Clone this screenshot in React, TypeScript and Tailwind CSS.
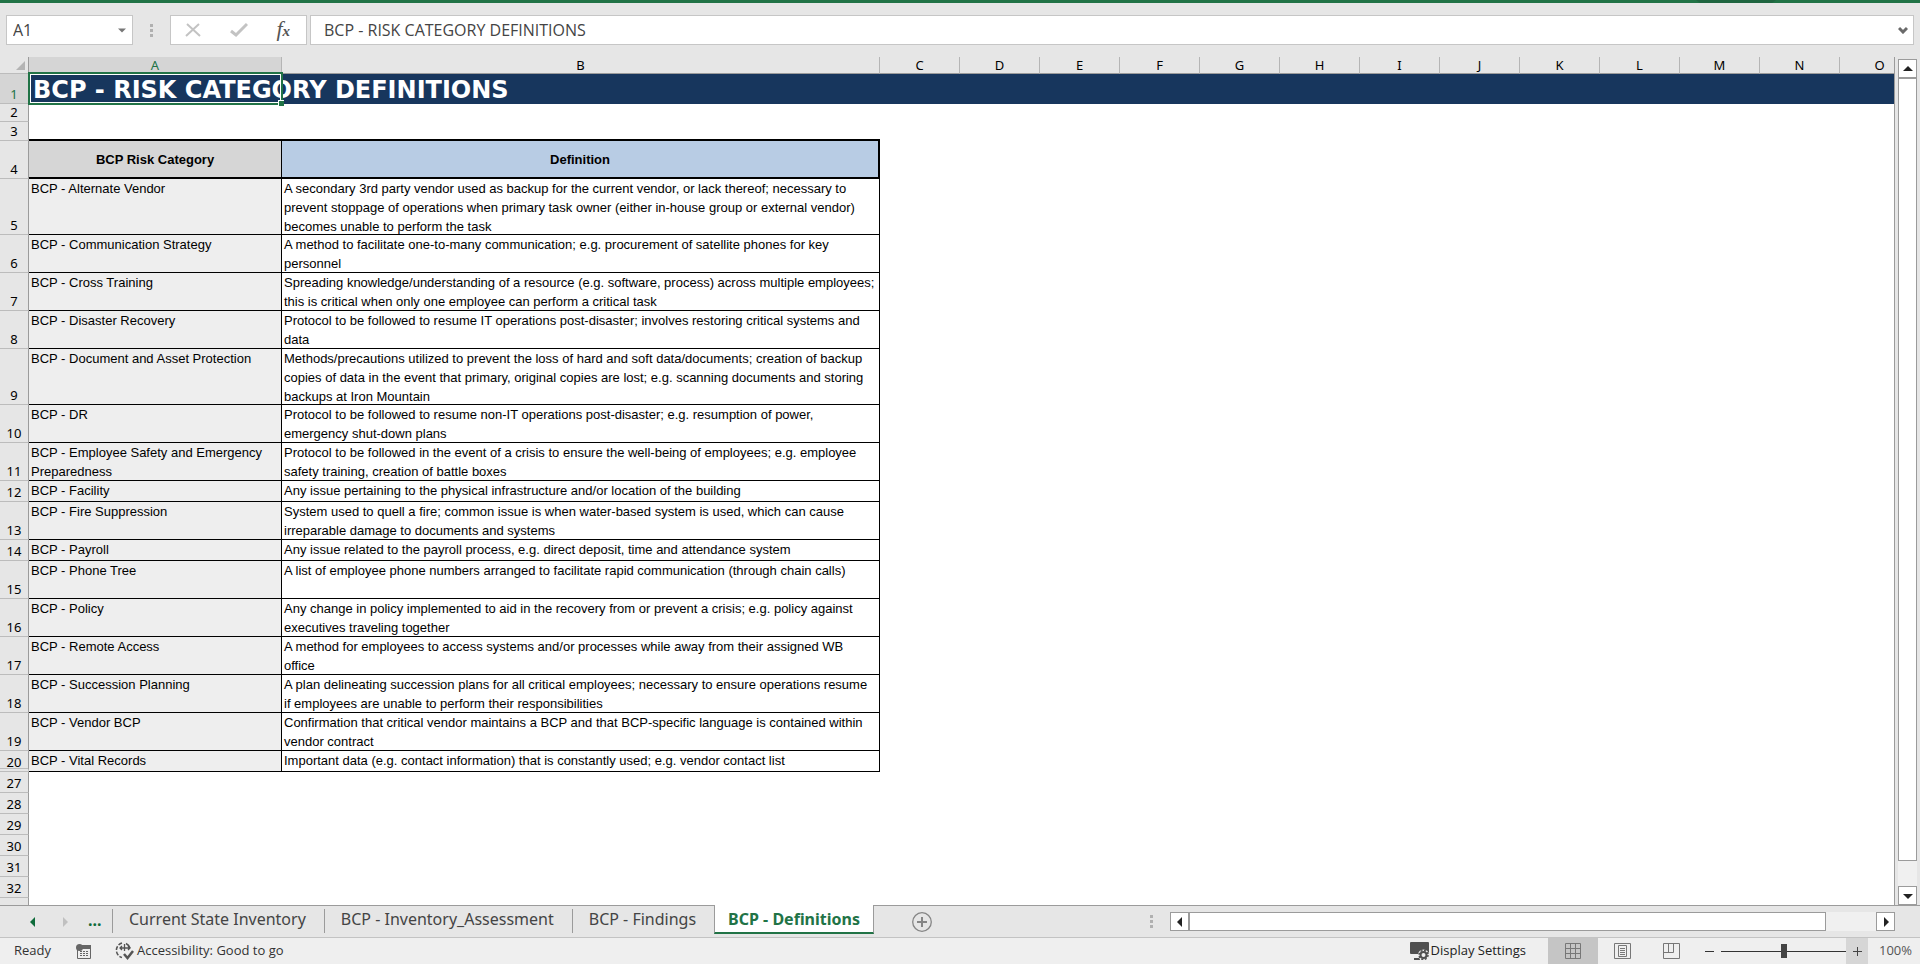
import clsx from "clsx";

type Entry = {
  row: number;
  height: string;
  category: string;
  definition: string[];
};

const entries: Entry[] = [
  {
    row: 5,
    height: "h-14",
    category: "BCP - Alternate Vendor",
    definition: [
      "A secondary 3rd party vendor used as backup for the current vendor, or lack thereof; necessary to",
      "prevent stoppage of operations when primary task owner (either in-house group or external vendor)",
      "becomes unable to perform the task",
    ],
  },
  {
    row: 6,
    height: "h-[38px]",
    category: "BCP - Communication Strategy",
    definition: [
      "A method to facilitate one-to-many communication; e.g. procurement of satellite phones for key",
      "personnel",
    ],
  },
  {
    row: 7,
    height: "h-[38px]",
    category: "BCP - Cross Training",
    definition: [
      "Spreading knowledge/understanding of a resource (e.g. software, process) across multiple employees;",
      "this is critical when only one employee can perform a critical task",
    ],
  },
  {
    row: 8,
    height: "h-[38px]",
    category: "BCP - Disaster Recovery",
    definition: [
      "Protocol to be followed to resume IT operations post-disaster; involves restoring critical systems and",
      "data",
    ],
  },
  {
    row: 9,
    height: "h-14",
    category: "BCP - Document and Asset Protection",
    definition: [
      "Methods/precautions utilized to prevent the loss of hard and soft data/documents; creation of backup",
      "copies of data in the event that primary, original copies are lost; e.g. scanning documents and storing",
      "backups at Iron Mountain",
    ],
  },
  {
    row: 10,
    height: "h-[38px]",
    category: "BCP - DR",
    definition: [
      "Protocol to be followed to resume non-IT operations post-disaster; e.g. resumption of power,",
      "emergency shut-down plans",
    ],
  },
  {
    row: 11,
    height: "h-[38px]",
    category: "BCP - Employee Safety and Emergency Preparedness",
    definition: [
      "Protocol to be followed in the event of a crisis to ensure the well-being of employees; e.g. employee",
      "safety training, creation of battle boxes",
    ],
  },
  {
    row: 12,
    height: "h-[21px]",
    category: "BCP - Facility",
    definition: ["Any issue pertaining to the physical infrastructure and/or location of the building"],
  },
  {
    row: 13,
    height: "h-[38px]",
    category: "BCP - Fire Suppression",
    definition: [
      "System used to quell a fire; common issue is when water-based system is used, which can cause",
      "irreparable damage to documents and systems",
    ],
  },
  {
    row: 14,
    height: "h-[21px]",
    category: "BCP - Payroll",
    definition: ["Any issue related to the payroll process, e.g. direct deposit, time and attendance system"],
  },
  {
    row: 15,
    height: "h-[38px]",
    category: "BCP - Phone Tree",
    definition: ["A list of employee phone numbers arranged to facilitate rapid communication (through chain calls)"],
  },
  {
    row: 16,
    height: "h-[38px]",
    category: "BCP - Policy",
    definition: [
      "Any change in policy implemented to aid in the recovery from or prevent a crisis; e.g. policy against",
      "executives traveling together",
    ],
  },
  {
    row: 17,
    height: "h-[38px]",
    category: "BCP - Remote Access",
    definition: [
      "A method for employees to access systems and/or processes while away from their assigned WB",
      "office",
    ],
  },
  {
    row: 18,
    height: "h-[38px]",
    category: "BCP - Succession Planning",
    definition: [
      "A plan delineating succession plans for all critical employees; necessary to ensure operations resume",
      "if employees are unable to perform their responsibilities",
    ],
  },
  {
    row: 19,
    height: "h-[38px]",
    category: "BCP - Vendor BCP",
    definition: [
      "Confirmation that critical vendor maintains a BCP and that BCP-specific language is contained within",
      "vendor contract",
    ],
  },
  {
    row: 20,
    height: "h-[21px]",
    category: "BCP - Vital Records",
    definition: ["Important data (e.g. contact information) that is constantly used; e.g. vendor contact list"],
  },
];

const extraColumns = ["C", "D", "E", "F", "G", "H", "I", "J", "K", "L", "M", "N", "O"];
const emptyRows = [27, 28, 29, 30, 31, 32];
const otherTabs = ["Current State Inventory", "BCP - Inventory_Assessment", "BCP - Findings"];

function Triangle({ direction, className }: { direction: "up" | "down" | "left" | "right"; className?: string }) {
  const points = {
    up: "0,7 5,2 10,7",
    down: "0,3 10,3 5,8",
    left: "7,0 2,5 7,10",
    right: "3,0 8,5 3,10",
  };
  return (
    <svg viewBox="0 0 10 10" className={clsx("fill-current", className ?? "size-[10px]")} aria-hidden="true">
      <polygon points={points[direction]} />
    </svg>
  );
}

function Dots() {
  return (
    <svg viewBox="0 0 3 13" className="h-[13px] w-[3px] fill-[#b0b0b0]" aria-hidden="true">
      <path d="M0 0h3v3H0zM0 5h3v3H0zM0 10h3v3H0z" />
    </svg>
  );
}

function RowHeader({ children, className }: { children?: React.ReactNode; className?: string }) {
  return (
    <th
      scope="row"
      className={clsx(
        "border-r border-b border-r-[#9b9b9b] border-b-[#bcbcbc] px-0 pt-0 pb-px text-center align-bottom font-['Noto_Sans'] text-[13px] leading-4 font-normal",
        className ?? "bg-[#e6e6e6] text-black",
      )}
    >
      {children}
    </th>
  );
}

function FormulaBar() {
  return (
    <div className="flex h-[54px] items-start px-[6px] pt-3 text-[#444]">
      <div className="flex h-[30px] w-[127px] items-center border border-[#c6c6c6] bg-white px-[6px]">
        <input
          aria-label="Name box"
          defaultValue="A1"
          className="w-full min-w-0 bg-transparent font-['Open_Sans'] text-base outline-none"
        />
        <button aria-label="Open name list">
          <Triangle direction="down" className="size-2 text-[#777]" />
        </button>
      </div>
      <div className="flex h-[30px] w-[37px] items-center justify-center">
        <Dots />
      </div>
      <div className="flex h-[30px] w-[137px] items-center justify-between border border-[#c6c6c6] bg-white pr-4 pl-[14px]">
        <button aria-label="Cancel">
          <svg viewBox="0 0 16 16" className="size-4 stroke-[#c3c3c3]" strokeWidth="2" fill="none">
            <path d="M2 2 15 14M14 2 1 14" />
          </svg>
        </button>
        <button aria-label="Enter">
          <svg viewBox="0 0 18 16" className="h-4 w-[18px] stroke-[#c3c3c3]" strokeWidth="3" fill="none">
            <path d="M1 9 6 13 17 2" />
          </svg>
        </button>
        <button
          aria-label="Insert function"
          className="font-['Liberation_Serif'] text-[22px] leading-6 text-[#555] italic"
        >
          f<span className="text-[15px] font-bold">x</span>
        </button>
      </div>
      <div className="ml-[3px] flex h-[30px] flex-1 items-center border border-[#c6c6c6] bg-white pr-[5px] pl-[13px]">
        <input
          aria-label="Formula"
          defaultValue="BCP - RISK CATEGORY DEFINITIONS"
          className="w-full bg-transparent font-['Open_Sans'] text-base outline-none"
        />
        <button aria-label="Expand formula bar">
          <svg viewBox="0 0 10 8" className="h-2 w-[10px] stroke-[#6a6a6a]" strokeWidth="3" fill="none">
            <path d="M1 2 5 6 9 2" />
          </svg>
        </button>
      </div>
    </div>
  );
}

function ColumnHeader({ children, className }: { children: string; className?: string }) {
  return (
    <th
      scope="col"
      className={clsx(
        "h-[17px] border-r border-b border-r-[#b5b5b5] border-b-[#9b9b9b] p-0 text-center font-['Noto_Sans'] text-[13px] leading-4 font-normal",
        className,
      )}
    >
      {children}
    </th>
  );
}

function Sheet() {
  return (
    <div className="min-w-0 flex-1 overflow-hidden border-r border-[#9b9b9b] bg-white">
      <table className="w-[1920px] table-fixed border-separate border-spacing-0">
        <colgroup>
          <col className="w-[29px]" />
          <col className="w-[253px]" />
          <col className="w-[598px]" />
          {extraColumns.map((name) => (
            <col key={name} className="w-20" />
          ))}
        </colgroup>
        <thead className="bg-[#e6e6e6]">
          <tr>
            <td className="border-r border-b border-r-[#9b9b9b] border-b-[#bcbcbc] p-0">
              <svg viewBox="0 0 10 10" className="ml-4 size-[9px] fill-[#b4b4b4]" aria-hidden="true">
                <path d="M10 0V10H0z" />
              </svg>
            </td>
            <ColumnHeader className="bg-[#d5d5d5] text-[#217346]">A</ColumnHeader>
            <ColumnHeader>B</ColumnHeader>
            {extraColumns.map((name) => (
              <ColumnHeader key={name}>{name}</ColumnHeader>
            ))}
          </tr>
        </thead>
        <tbody className="font-['Liberation_Sans'] text-[13px] leading-[19px] text-black">
          <tr className="h-[30px]">
            <RowHeader className="bg-[#d5d5d5] text-[#217346]">1</RowHeader>
            <td colSpan={15} className="relative bg-[#17365d] p-0">
              <h1 className="pt-[2px] pl-1 font-['DejaVu_Sans'] text-2xl leading-7 font-bold text-white">
                BCP - RISK CATEGORY DEFINITIONS
              </h1>
              <div className="absolute -top-[2px] -left-[1px] h-[33px] w-[255px] border-2 border-[#217346]">
                <div className="h-full border border-white" />
                <div className="absolute -right-[3px] -bottom-[3px] size-[6px] border-t border-l border-white bg-[#217346]" />
              </div>
            </td>
          </tr>
          <tr className="h-[18px]">
            <RowHeader>2</RowHeader>
            <td colSpan={15} className="p-0" />
          </tr>
          <tr className="h-[19px]">
            <RowHeader>3</RowHeader>
            <td colSpan={2} className="border-b-2 border-black p-0" />
          </tr>
          <tr className="h-[38px]">
            <RowHeader>4</RowHeader>
            <th scope="col" className="border-r border-b-2 border-black bg-[#d6d6d6] p-0">
              BCP Risk Category
            </th>
            <th scope="col" className="border-r-2 border-b-2 border-black bg-[#b8cce4] p-0">
              Definition
            </th>
          </tr>
          {entries.map((entry) =>  (
            <tr key={entry.row} className={entry.height}>
              {entry.row === 20 ? (
                // rows 21-26 are hidden, so the header closes with a double rule
                <RowHeader className="border-b-4 border-double bg-[#e6e6e6] text-black">
                  <div className="-mb-[3px]">{entry.row}</div>
                </RowHeader>
              ) : (
                <RowHeader>{entry.row}</RowHeader>
              )}
              <td className="border-r border-b border-black bg-[#eee] py-0 pr-3 pl-[2px] align-top">
                <div className="-mb-2">{entry.category}</div>
              </td>
              <td className="border-r border-b border-black py-0 pr-0 pl-[2px] align-top whitespace-nowrap">
                <div className="-mb-2">
                  {entry.definition.map((line) => (
                    <p key={line}>{line}</p>
                  ))}
                </div>
              </td>
            </tr>
          ))}
          {emptyRows.map((row) => (
            <tr key={row} className="h-[21px]">
              <RowHeader>{row}</RowHeader>
            </tr>
          ))}
          <tr className="h-[21px]">
            <RowHeader />
          </tr>
        </tbody>
      </table>
    </div>
  );
}

const scrollButton = "flex items-center justify-center border border-[#9b9b9b] bg-white text-[#222]";

function VerticalScrollbar() {
  return (
    <div className="flex w-[25px] flex-col px-[3px] pt-[2px]">
      <button aria-label="Scroll up" className={clsx(scrollButton, "h-[19px]")}>
        <Triangle direction="up" />
      </button>
      <div className="flex flex-1 flex-col bg-[#f0f0f0]">
        <div className="min-h-0 flex-1 border border-[#9b9b9b] bg-white" />
        <div className="h-[25px]" />
      </div>
      <button aria-label="Scroll down" className={clsx(scrollButton, "h-[19px]")}>
        <Triangle direction="down" />
      </button>
    </div>
  );
}

function HorizontalScrollbar() {
  return (
    <div className="flex h-[19px] w-[725px] bg-[#f0f0f0]">
      <button aria-label="Scroll left" className={clsx(scrollButton, "w-[19px]")}>
        <Triangle direction="left" />
      </button>
      <div className="flex-1 border border-[#9b9b9b] bg-white" />
      <div className="w-[50px]" />
      <button aria-label="Scroll right" className={clsx(scrollButton, "w-[19px]")}>
        <Triangle direction="right" />
      </button>
    </div>
  );
}

function TabBar() {
  return (
    <div className="flex h-[33px] items-start border-b border-[#c3c3c3] font-['Noto_Sans'] text-base text-[#444]">
      <div className="flex h-8 w-[112px] items-center border-t border-[#9b9b9b] pl-[28px] text-[#0e6b3a]">
        <button aria-label="Previous sheet">
          <Triangle direction="left" />
        </button>
        <button aria-label="Next sheet" className="ml-[22px] text-[#c0c0c0]">
          <Triangle direction="right" />
        </button>
        <button aria-label="More sheets" className="ml-[18px] pb-1 font-bold">
          ...
        </button>
      </div>
      {otherTabs.map((tab) => (
        <div key={tab} className="flex h-8 items-start border-t border-[#9b9b9b] pt-[3px]">
          <button className="h-6 border-l border-[#9b9b9b] pr-[18px] pb-1 pl-4 leading-5">{tab}</button>
        </div>
      ))}
      <button className="h-[29px] border-x border-b-2 border-x-[#9b9b9b] border-b-[#217346] bg-white px-[13px] pt-px font-bold text-[#217346]">
        BCP - Definitions
      </button>
      <div className="flex h-8 flex-1 items-center border-t border-[#9b9b9b] pr-[25px] pl-[38px]">
        <button aria-label="New sheet" className="mr-auto">
          <svg viewBox="0 0 20 20" className="size-5" fill="none" stroke="#858585">
            <circle cx="10" cy="10" r="9.3" strokeWidth="1.3" />
            <path d="M10 5v10M5 10h10" strokeWidth="2" />
          </svg>
        </button>
        <div className="pr-[17px]">
          <Dots />
        </div>
        <HorizontalScrollbar />
      </div>
    </div>
  );
}

function MacroIcon() {
  return (
    <svg viewBox="0 0 15 15" className="size-[15px]" aria-hidden="true">
      <path d="M1.5 6v8.5h13v-13H6" fill="none" stroke="#666" />
      <path d="M6 1h9v4H6z" fill="#666" />
      <circle cx="3.5" cy="3.5" r="3.5" fill="#666" />
      <path d="M4 7.5h9M4 9.5h9M4 11.5h9" stroke="#666" strokeDasharray="2 1" />
    </svg>
  );
}

function AccessibilityIcon() {
  return (
    <svg viewBox="0 0 19 18" className="h-[18px] w-[19px]" fill="none" stroke="#555" aria-hidden="true">
      <path d="M7 1A7.5 7.5 0 0 0 7 15.5" strokeWidth="1.5" strokeDasharray="4 1.5" />
      <path d="M11 1.5A7.5 7.5 0 0 1 15 6" strokeWidth="1.5" />
      <path d="M5 6h10M7 4 5 6l2 2M13 4l2 2-2 2M9.5 2v7" strokeWidth="1.3" />
      <path d="M9 12l3.5 4L18 9" strokeWidth="2.5" />
    </svg>
  );
}

function DisplayIcon() {
  return (
    <svg viewBox="0 0 19 18" className="h-[18px] w-[19px]" aria-hidden="true">
      <path d="M1 0h17a1 1 0 0 1 1 1v11H1a1 1 0 0 1-1-1V1a1 1 0 0 1 1-1zM4 16h6v2H4z" fill="#505050" />
      <circle cx="13.5" cy="13" r="5.5" fill="#efefef" />
      <circle cx="13.5" cy="13" r="3" fill="none" stroke="#505050" strokeWidth="2" />
      <circle cx="13.5" cy="13" r="4.5" fill="none" stroke="#505050" strokeWidth="1.5" strokeDasharray="2 1.53" />
    </svg>
  );
}

function StatusBar() {
  return (
    <footer className="flex h-[26px] items-center bg-[#efefef] pl-[14px] font-['Open_Sans'] text-[13px] text-[#333]">
      <span className="w-[62px]">Ready</span>
      <button aria-label="Record macro">
        <MacroIcon />
      </button>
      <button className="ml-6 flex items-center gap-[3px]">
        <AccessibilityIcon />
        Accessibility: Good to go
      </button>
      <button className="mr-[22px] ml-auto flex items-center gap-[2px] text-[#222]">
        <DisplayIcon />
        Display Settings
      </button>
      <button aria-label="Normal view" className="flex h-full w-[50px] items-center justify-center bg-[#c5c5c5]">
        <svg viewBox="0 0 16 16" className="size-4" fill="none" stroke="#777">
          <path d="M.5.5h15v15H.5zM5.5.5v15M10.5.5v15M.5 5.5h15M.5 10.5h15" />
        </svg>
      </button>
      <button aria-label="Page layout view" className="flex h-full w-[49px] items-center justify-center">
        <svg viewBox="0 0 17 16" className="h-4 w-[17px]" fill="none" stroke="#777">
          <path d="M.5.5h16v15H.5zM4.5 2.5h8v11h-8zM6 5.5h5M6 7.5h5M6 9.5h5M6 11.5h5" />
        </svg>
      </button>
      <button aria-label="Page break preview" className="flex h-full w-[49px] items-center justify-center">
        <svg viewBox="0 0 17 16" className="h-4 w-[17px]" fill="none" stroke="#777">
          <path d="M.5.5h16v15H.5zM.5 9.5h10v-9M5.5.5v9" />
        </svg>
      </button>
      <button aria-label="Zoom out" className="mr-[6px] ml-2">
        <svg viewBox="0 0 11 11" className="size-[11px] stroke-[#333]">
          <path d="M1 5.5h9" />
        </svg>
      </button>
      <input
        type="range"
        aria-label="Zoom"
        defaultValue={50}
        className="h-[15px] w-[125px] appearance-none bg-[linear-gradient(#333,#333)] bg-size-[100%_1px] bg-center bg-no-repeat [&::-webkit-slider-thumb]:h-[14px] [&::-webkit-slider-thumb]:w-[6px] [&::-webkit-slider-thumb]:appearance-none [&::-webkit-slider-thumb]:bg-[#444]"
      />
      <button aria-label="Zoom in" className="flex h-full w-[22px] items-center justify-center bg-[#d6d6d6]">
        <svg viewBox="0 0 11 11" className="size-[11px] stroke-[#444]">
          <path d="M1 5.5h9M5.5 1v9" />
        </svg>
      </button>
      <span className="w-[52px] pl-[11px] text-[#555]">100%</span>
    </footer>
  );
}

export default function App() {
  return (
    <main className="flex h-screen flex-col bg-[#e6e6e6]">
      <div className="flex h-[3px] justify-end bg-[#217346] pr-36">
        <svg viewBox="0 0 80 3" className="h-[3px] w-20 fill-[#1f6540]" aria-hidden="true">
          <path d="M0 0h80l-4 3H4z" />
        </svg>
      </div>
      <FormulaBar />
      <div className="flex min-h-0 flex-1">
        <Sheet />
        <VerticalScrollbar />
      </div>
      <TabBar />
      <StatusBar />
      <div className="h-[2px] bg-white" />
    </main>
  );
}
